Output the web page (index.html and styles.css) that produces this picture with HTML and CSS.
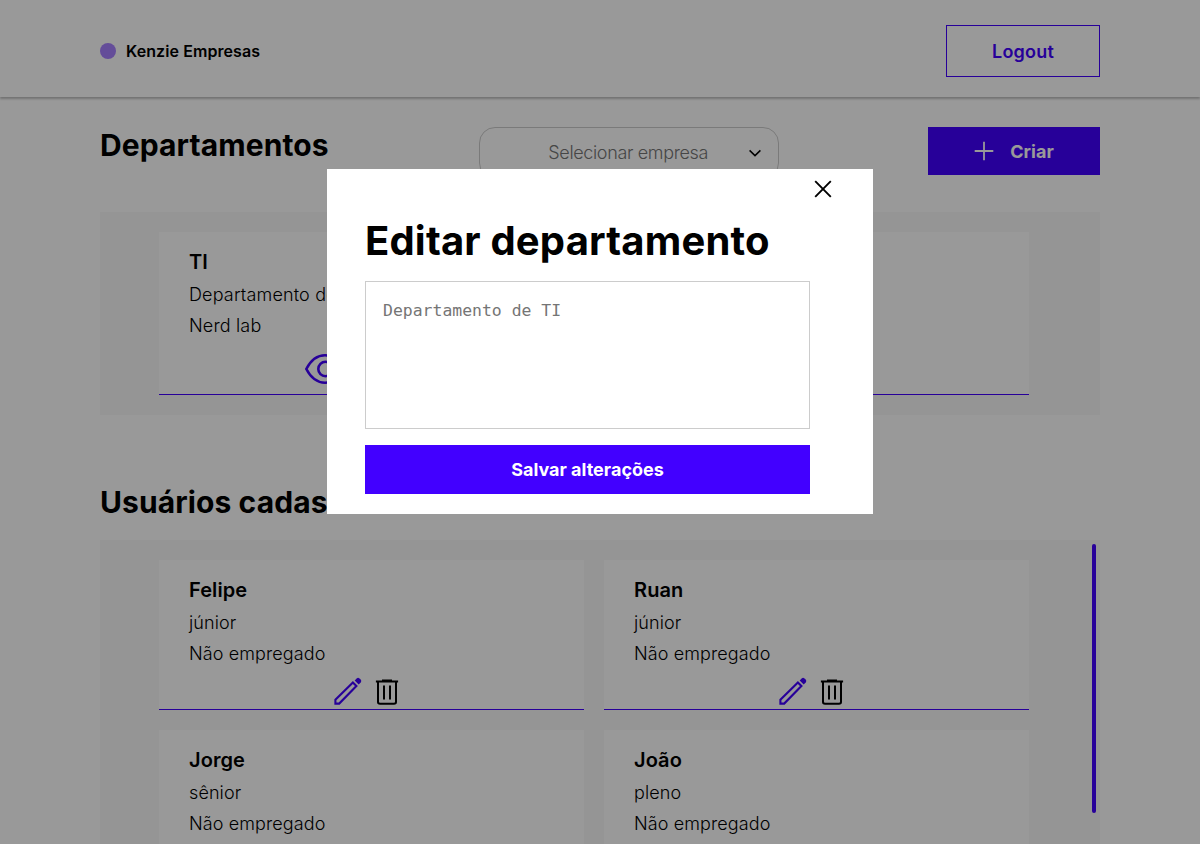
FILE: index.html
```
<!DOCTYPE html>
<html lang="pt-BR">
<head>
<meta charset="UTF-8">
<title>Kenzie Empresas</title>
<link rel="stylesheet" href="styles.css">
</head>
<body>
<svg class="sprite" aria-hidden="true">
  <symbol id="pencil" viewBox="0 0 28 28">
    <path d="M1.4 26.6V22.8L18.9 5.6L22.4 9.1L5.2 26.6Z" fill="none" stroke="currentColor" stroke-width="2.1"/>
    <path d="M20.7 3.4L22.7 1.4Q24 .2 25.5 1.4L26.7 2.6Q27.9 4.1 26.7 5.5L24.7 7.4Z" fill="currentColor"/>
  </symbol>
  <symbol id="trash" viewBox="0 0 24 28">
    <path d="M.9 3.6H23.1M7 2.4H17M3 4V24Q3 25.8 5 25.8H19Q21 25.8 21 24V4M9 7.6V21.4M15 7.6V21.4" fill="none" stroke="currentColor" stroke-width="2"/>
  </symbol>
  <symbol id="eye" viewBox="0 0 40 30">
    <path d="M1.3 15Q8.5 1.3 20 1.3T38.7 15Q31.5 28.7 20 28.7T1.3 15Z" fill="none" stroke="currentColor" stroke-width="2.6"/>
    <circle cx="20.5" cy="15" r="7.2" fill="none" stroke="currentColor" stroke-width="2.6"/>
  </symbol>
</svg>

<header class="header">
  <div class="brand"><span class="dot"></span>Kenzie Empresas</div>
  <button class="logout">Logout</button>
</header>

<main class="content">
  <div class="toolbar">
    <h1>Departamentos</h1>
    <div class="select">
      <span>Selecionar empresa</span>
      <svg class="chevron" viewBox="0 0 14 8"><path d="M1.6 1.4L7 6.6L12.4 1.4" fill="none" stroke="#000" stroke-width="1.5"/></svg>
    </div>
    <button class="create"><svg class="plus" viewBox="0 0 20 20"><path d="M10 .7V19.3M.7 10H19.3" stroke="#fff" stroke-width="1.8"/></svg>Criar</button>
  </div>

  <section class="panel departments">
    <article class="card">
      <h2>TI</h2><p>Departamento de TI</p><p>Nerd lab</p>
      <div class="actions">
        <svg class="eye"><use href="#eye"/></svg>
        <svg class="pencil"><use href="#pencil"/></svg>
        <svg class="trash"><use href="#trash"/></svg>
      </div>
    </article>
    <article class="card"></article>
  </section>

  <h1 class="users-title">Usuários cadastrados</h1>
  <section class="panel users">
    <article class="card">
      <h2>Felipe</h2><p>júnior</p><p>Não empregado</p>
      <div class="actions"><svg class="pencil"><use href="#pencil"/></svg><svg class="trash"><use href="#trash"/></svg></div>
    </article>
    <article class="card">
      <h2>Ruan</h2><p>júnior</p><p>Não empregado</p>
      <div class="actions"><svg class="pencil"><use href="#pencil"/></svg><svg class="trash"><use href="#trash"/></svg></div>
    </article>
    <article class="card">
      <h2>Jorge</h2><p>sênior</p><p>Não empregado</p>
    </article>
    <article class="card">
      <h2>João</h2><p>pleno</p><p>Não empregado</p>
    </article>
    <span class="scroll-thumb"></span>
  </section>
</main>

<div class="overlay">
  <div class="modal">
    <button class="close" aria-label="Fechar"><svg viewBox="0 0 18 18"><path d="M1.2 1.2L16.8 16.8M16.8 1.2L1.2 16.8" stroke="#000" stroke-width="1.9"/></svg></button>
    <h2 class="modal-title">Editar departamento</h2>
    <textarea class="description" placeholder="Departamento de TI"></textarea>
    <button class="save">Salvar alterações</button>
  </div>
</div>
</body>
</html>
```

FILE: styles.css
```
* { box-sizing: border-box; margin: 0; padding: 0; }

body {
  height: 844px;
  overflow: hidden;
  background: #fff;
  color: #000;
  font-family: Inter, sans-serif;
}

button { font-family: inherit; border: 0; }
svg { display: block; }
.sprite { display: none; }

.header {
  display: flex;
  align-items: center;
  justify-content: space-between;
  height: 97px;
  padding: 5px 100px 0;
  box-shadow: 0 2px 2px rgba(0, 0, 0, 0.25);
}

.brand {
  display: flex;
  align-items: center;
  gap: 10px;
  font-size: 16px;
  font-weight: 600;
  letter-spacing: 0.08px;
}

.dot { width: 16px; height: 16px; border-radius: 50%; background: #a780ff; }

.logout {
  width: 154px;
  height: 52px;
  border: 1px solid #4200ff;
  background: #fff;
  color: #4200ff;
  font-size: 18px;
  font-weight: 600;
  letter-spacing: 0.2px;
}

.content { width: 1000px; margin: 0 auto; padding-top: 30px; }

.toolbar { display: flex; justify-content: space-between; height: 85px; }

h1 {
  font-size: 30px;
  font-weight: 700;
  line-height: 37px;
  letter-spacing: 0.1px;
}

.toolbar h1 { width: 230px; }

.select {
  display: flex;
  align-items: center;
  justify-content: flex-end;
  gap: 40px;
  width: 300px;
  height: 52px;
  margin-right: 28px;
  margin-left: 28px;
  padding-right: 16px;
  border: 1px solid #ccc;
  border-radius: 16px;
  color: #757575;
  font-size: 18px;
  font-weight: 300;
  letter-spacing: -0.36px;
}

.select span { margin-top: -2px; }
.chevron { width: 14px; height: 8px; }

.create {
  display: flex;
  align-items: center;
  justify-content: center;
  gap: 16px;
  width: 172px;
  height: 48px;
  background: #4200ff;
  color: #fff;
  font-size: 18px;
  font-weight: 700;
}

.plus { width: 20px; height: 20px; }

.panel {
  display: grid;
  grid-template-columns: 425px 425px;
  gap: 20px;
  padding: 20px 0 20px 59px;
  background: #f8f8f8;
}

.departments { grid-auto-rows: 163px; }

.users {
  position: relative;
  grid-template-rows: 150px 114px;
  height: 304px;
  padding-bottom: 0;
}

.users-title { margin: 69px 0 19px; }

.card {
  display: flex;
  flex-direction: column;
  padding: 18px 30px 0;
  border-bottom: 1px solid #4200ff;
  background: #fff;
}

.users .card:nth-of-type(n + 3) { border-bottom: 0; }

.card h2 { font-size: 20px; font-weight: 600; line-height: 24px; letter-spacing: 0.08px; }

.card p {
  margin-top: 9px;
  font-size: 18px;
  font-weight: 300;
  line-height: 22px;
  letter-spacing: 0.1px;
  white-space: nowrap;
}

.departments .card p { letter-spacing: 0.16px; }

.card h2 + p { margin-top: 10px; }

.actions {
  display: flex;
  align-items: center;
  justify-content: center;
  gap: 13px;
  height: 28px;
  margin-top: 12px;
  margin-right: 10px;
}

.departments .actions { margin-top: 18px; margin-right: 16px; }

.pencil { width: 28px; height: 28px; color: #4200ff; }
.trash { width: 24px; height: 28px; transform: translateY(1px); }
.eye { width: 44px; height: 30px; color: #4200ff; }

.scroll-thumb {
  position: absolute;
  top: 4px;
  right: 4px;
  width: 4px;
  height: 269px;
  border-radius: 4px;
  background: #4200ff;
}

.overlay {
  position: fixed;
  inset: 0;
  display: flex;
  align-items: flex-start;
  justify-content: center;
  padding-top: 169px;
  background: rgba(0, 0, 0, 0.4);
}

.modal {
  display: flex;
  flex-direction: column;
  width: 546px;
  height: 345px;
  padding: 11px 63px 20px 38px;
  background: #fff;
}

.close { align-self: flex-end; margin-right: -22px; background: none; }
.close svg { width: 18px; height: 18px; }

.modal-title {
  margin-top: 19px;
  font-size: 40px;
  font-weight: 700;
  line-height: 48px;
  letter-spacing: 0.18px;
  white-space: nowrap;
}

.description {
  height: 148px;
  margin-top: 16px;
  padding: 18px 17px;
  border: 1px solid #ccc;
  resize: none;
  font-family: "DejaVu Sans Mono", monospace;
  font-size: 16.44px;
  line-height: 21px;
}

.description::placeholder { color: #757575; }

.save {
  height: 49px;
  margin-top: 16px;
  background: #4200ff;
  color: #fff;
  font-size: 18px;
  font-weight: 700;
}
```
